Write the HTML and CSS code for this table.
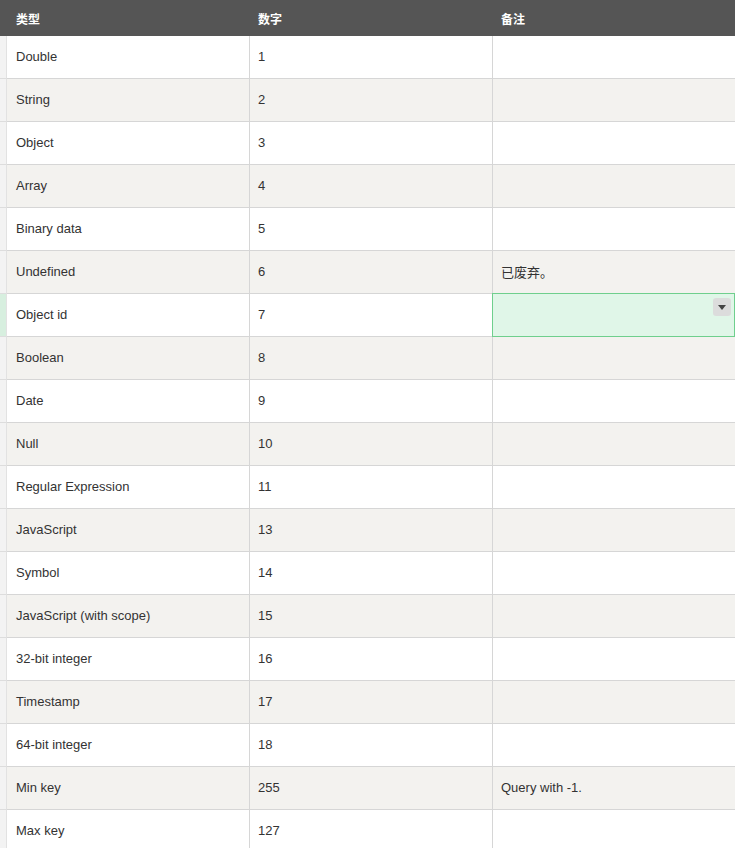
FILE: index.html
```html
<!DOCTYPE html>
<html>
<head>
<meta charset="utf-8">
<link rel="stylesheet" href="styles.css">
</head>
<body>
<table class="sheet">
  <thead>
    <tr class="head">
      <th class="gut"></th>
      <th>类型</th>
      <th>数字</th>
      <th>备注</th>
    </tr>
  </thead>
  <tbody>
    <tr><td class="gut"></td><td>Double</td><td>1</td><td></td></tr>
    <tr><td class="gut"></td><td>String</td><td>2</td><td></td></tr>
    <tr><td class="gut"></td><td>Object</td><td>3</td><td></td></tr>
    <tr><td class="gut"></td><td>Array</td><td>4</td><td></td></tr>
    <tr><td class="gut"></td><td>Binary data</td><td>5</td><td></td></tr>
    <tr><td class="gut"></td><td>Undefined</td><td>6</td><td>已废弃。</td></tr>
    <tr class="active"><td class="gut"></td><td>Object id</td><td>7</td><td class="sel"><span class="drop"><svg width="8" height="5" viewBox="0 0 8 5"><path d="M0 0H8L4 5Z" fill="#444"/></svg></span></td></tr>
    <tr><td class="gut"></td><td>Boolean</td><td>8</td><td></td></tr>
    <tr><td class="gut"></td><td>Date</td><td>9</td><td></td></tr>
    <tr><td class="gut"></td><td>Null</td><td>10</td><td></td></tr>
    <tr><td class="gut"></td><td>Regular Expression</td><td>11</td><td></td></tr>
    <tr><td class="gut"></td><td>JavaScript</td><td>13</td><td></td></tr>
    <tr><td class="gut"></td><td>Symbol</td><td>14</td><td></td></tr>
    <tr><td class="gut"></td><td>JavaScript (with scope)</td><td>15</td><td></td></tr>
    <tr><td class="gut"></td><td>32-bit integer</td><td>16</td><td></td></tr>
    <tr><td class="gut"></td><td>Timestamp</td><td>17</td><td></td></tr>
    <tr><td class="gut"></td><td>64-bit integer</td><td>18</td><td></td></tr>
    <tr><td class="gut"></td><td>Min key</td><td>255</td><td>Query with -1.</td></tr>
    <tr><td class="gut"></td><td>Max key</td><td>127</td><td></td></tr>
  </tbody>
</table>
</body>
</html>
```
FILE: styles.css
```css
html, body {
  margin: 0;
  padding: 0;
  background: #ffffff;
}
body {
  font-family: "Liberation Sans", Arial, "Noto Sans CJK SC", sans-serif;
  color: #333333;
  overflow: hidden;
}
.sheet {
  border-collapse: separate;
  border-spacing: 0;
  table-layout: fixed;
  width: 735px;
}
.sheet th, .sheet td {
  padding: 0 0 0 8px;
  text-align: left;
  vertical-align: middle;
  box-sizing: border-box;
}
.sheet th:nth-child(2), .sheet td:nth-child(2) { padding-left: 9px; }
.head th {
  background: #555555;
  color: #ffffff;
  font-size: 12px;
  font-weight: bold;
  height: 36px;
  font-family: "Noto Sans CJK SC", sans-serif;
}
.head th.gut { width: 7px; padding: 0; }
.head th:nth-child(2) { width: 243px; }
.head th:nth-child(3) { width: 243px; }
.head th:nth-child(4) { width: 242px; }
.sheet td {
  height: 43px;
  font-size: 13px;
  padding-bottom: 2px;
  border-bottom: 1px solid #d6d6d6;
  border-right: 1px solid #d6d6d6;
}
.sheet td:last-child { border-right: none; }
.sheet td.gut {
  padding: 0;
  background: #f3f3f3;
  border-right: 1px solid #e2e2e2;
  border-bottom: 1px solid #dddddd;
}
.sheet tbody tr:nth-child(even) td { background: #f3f2ef; }
.sheet tbody tr:nth-child(even) td.gut { background: #f3f3f3; }
.sheet tbody tr.active td.gut { background: #d7efdf; }
.sheet td.sel {
  position: relative;
  background: #e0f6e8;
}
.sheet td.sel::after {
  content: "";
  position: absolute;
  left: -1px;
  top: -1px;
  right: 0;
  bottom: -1px;
  border: 1px solid #6fcf8d;
  pointer-events: none;
}
.drop {
  position: absolute;
  right: 4px;
  top: 4px;
  width: 18px;
  height: 18px;
  border-radius: 3px;
  background: #dcdcdc;
  display: flex;
  align-items: center;
  justify-content: center;
}
```
